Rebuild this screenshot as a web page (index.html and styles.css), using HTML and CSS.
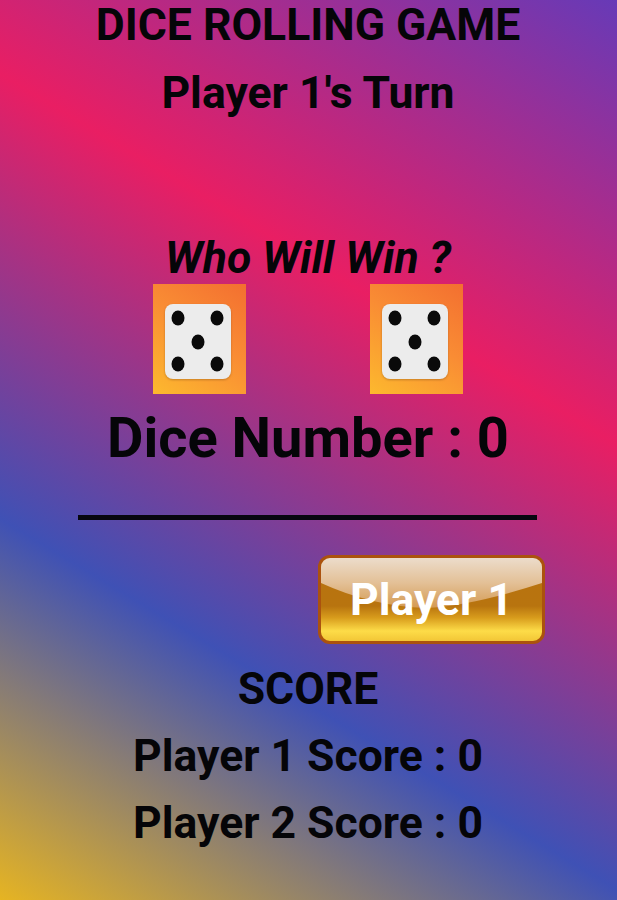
FILE: index.html
```html
<!DOCTYPE html>
<html lang="en">
<head>
  <meta charset="UTF-8">
  <meta name="viewport" content="width=device-width, initial-scale=1.0">
  <title>Dice Rolling Game</title>
  <link rel="stylesheet" href="styles.css">
</head>
<body>
  <div class="game">
    <h1 class="title">DICE ROLLING GAME</h1>
    <h2 class="turn">Player 1's Turn</h2>
    <p class="tagline">Who Will Win ?</p>

    <div class="dice-row">
      <div class="dice-tile">
        <svg class="die" viewBox="0 0 66 75" width="66" height="75">
          <rect x="0" y="0" width="66" height="75" rx="8" fill="#ececec"/>
          <ellipse cx="13" cy="14" rx="6.5" ry="7.5" fill="#0a0a0a"/>
          <ellipse cx="52" cy="14" rx="6.5" ry="7.5" fill="#0a0a0a"/>
          <ellipse cx="33" cy="38" rx="6.5" ry="7.5" fill="#0a0a0a"/>
          <ellipse cx="13" cy="60" rx="6.5" ry="7.5" fill="#0a0a0a"/>
          <ellipse cx="52" cy="60" rx="6.5" ry="7.5" fill="#0a0a0a"/>
        </svg>
      </div>
      <div class="dice-tile">
        <svg class="die" viewBox="0 0 66 75" width="66" height="75">
          <rect x="0" y="0" width="66" height="75" rx="8" fill="#ececec"/>
          <ellipse cx="13" cy="14" rx="6.5" ry="7.5" fill="#0a0a0a"/>
          <ellipse cx="52" cy="14" rx="6.5" ry="7.5" fill="#0a0a0a"/>
          <ellipse cx="33" cy="38" rx="6.5" ry="7.5" fill="#0a0a0a"/>
          <ellipse cx="13" cy="60" rx="6.5" ry="7.5" fill="#0a0a0a"/>
          <ellipse cx="52" cy="60" rx="6.5" ry="7.5" fill="#0a0a0a"/>
        </svg>
      </div>
    </div>

    <p class="dice-number">Dice Number : 0</p>
    <hr class="divider">

    <div class="button-row">
      <button class="roll-button">
        <svg class="gloss" viewBox="0 0 221 83" preserveAspectRatio="none">
          <defs>
            <linearGradient id="glossFill" x1="0" y1="0" x2="0" y2="1">
              <stop offset="0" stop-color="#ecdccb"/>
              <stop offset="0.5" stop-color="#e3c096"/>
              <stop offset="1" stop-color="#d49a52"/>
            </linearGradient>
          </defs>
          <path d="M0 0 H221 V25 Q150 48 105 50 Q50 48 0 25 Z" fill="url(#glossFill)"/>
        </svg>
        <span class="roll-label">Player 1</span>
      </button>
    </div>

    <h2 class="score-title">SCORE</h2>
    <p class="score">Player 1 Score : 0</p>
    <p class="score">Player 2 Score : 0</p>
  </div>
</body>
</html>
```

FILE: styles.css
```css
html, body {
  height: 100%;
}

body {
  margin: 0;
  background: linear-gradient(31deg, #e6b422 0%, #3f51b5 30%, #e91e63 65%, #673ab7 100%);
  color: #050508;
  font-family: 'Roboto', sans-serif;
  overflow: hidden;
}

.game {
  display: flex;
  flex-direction: column;
  box-sizing: border-box;
  height: 900px;
  padding-right: 1px;
  text-align: center;
}

.title, .turn, .tagline, .dice-number, .score-title, .score {
  margin: 0;
  font-size: 44.5px;
  font-weight: 700;
}

.title {
  line-height: 50px;
}

.turn {
  margin-top: 18px;
  line-height: 50px;
}

.tagline {
  margin-top: 115px;
  line-height: 50px;
  font-style: italic;
}

.dice-row {
  display: flex;
  justify-content: center;
  gap: 124px;
  margin-top: 1px;
}

.dice-tile {
  display: flex;
  width: 93px;
  height: 110px;
  padding: 20px 0 0 12px;
  box-sizing: border-box;
  background: linear-gradient(35deg, #fdb92e 0%, #f98c34 55%, #f36f30 100%);
}

.die {
  display: block;
  filter: drop-shadow(0 1px 1px rgba(120, 70, 20, 0.4));
}

.dice-number {
  margin-top: 14px;
  font-size: 56px;
  line-height: 60px;
}

.divider {
  width: 459px;
  height: 5px;
  margin: 47px 0 0 78px;
  border: none;
  background: #07070f;
}

.button-row {
  display: flex;
  justify-content: flex-end;
  padding-right: 71px;
  margin-top: 35px;
}

.roll-button {
  position: relative;
  width: 227px;
  height: 89px;
  padding: 0;
  border: 3px solid #ab520e;
  border-radius: 12px;
  background: linear-gradient(180deg, #b8720f 0%, #b8740f 58%, #d89c1c 72%, #fddc48 88%, #f2c636 100%);
  overflow: hidden;
  font-family: inherit;
}

.gloss {
  position: absolute;
  top: 0;
  left: 0;
  width: 100%;
  height: 100%;
}

.roll-label {
  position: relative;
  color: #fff;
  font-size: 44.5px;
  font-weight: 700;
}

.score-title {
  margin-top: 20px;
  line-height: 50px;
}

.score {
  margin-top: 17px;
  line-height: 50px;
}
```
